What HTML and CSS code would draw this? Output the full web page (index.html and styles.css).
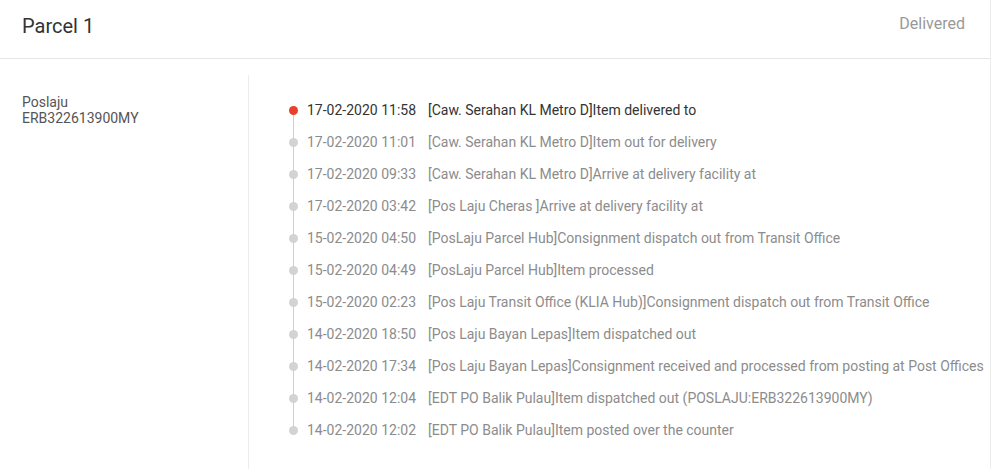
FILE: index.html
```html
<!DOCTYPE html>
<html lang="en">
<head>
  <meta charset="UTF-8">
  <title>Parcel Tracking</title>
  <meta name="viewport" content="width=device-width, initial-scale=1.0">
  <link rel="stylesheet" href="styles.css">
</head>

<body>
  <div class="card">
    <!-- Header -->
    <div class="card-header">
      <h2>Parcel 1</h2>
      <span class="status">Delivered</span>
    </div>

    <div class="card-body">
      <div class="courier">
        <div>Poslaju</div>
        <div>ERB322613900MY</div>
      </div>

      <ul class="timeline">
        <li class="active">
          <span class="dot"></span>
          <span class="date">17-02-2020 11:58</span>
          <span class="desc">[Caw. Serahan KL Metro D]Item delivered to</span>
        </li>
        <li>
          <span class="dot"></span>
          <span class="date">17-02-2020 11:01</span>
          <span class="desc">[Caw. Serahan KL Metro D]Item out for delivery</span>
        </li>
        <li>
          <span class="dot"></span>
          <span class="date">17-02-2020 09:33</span>
          <span class="desc">[Caw. Serahan KL Metro D]Arrive at delivery facility at</span>
        </li>
        <li>
          <span class="dot"></span>
          <span class="date">17-02-2020 03:42</span>
          <span class="desc">[Pos Laju Cheras ]Arrive at delivery facility at</span>
        </li>
        <li>
          <span class="dot"></span>
          <span class="date">15-02-2020 04:50</span>
          <span class="desc">[PosLaju Parcel Hub]Consignment dispatch out from Transit Office</span>
        </li>
        <li>
          <span class="dot"></span>
          <span class="date">15-02-2020 04:49</span>
          <span class="desc">[PosLaju Parcel Hub]Item processed</span>
        </li>
        <li>
          <span class="dot"></span>
          <span class="date">15-02-2020 02:23</span>
          <span class="desc">[Pos Laju Transit Office (KLIA Hub)]Consignment dispatch out from Transit Office</span>
        </li>
        <li>
          <span class="dot"></span>
          <span class="date">14-02-2020 18:50</span>
          <span class="desc">[Pos Laju Bayan Lepas]Item dispatched out</span>
        </li>
        <li>
          <span class="dot"></span>
          <span class="date">14-02-2020 17:34</span>
          <span class="desc">[Pos Laju Bayan Lepas]Consignment received and processed from posting at Post Offices</span>
        </li>
        <li>
          <span class="dot"></span>
          <span class="date">14-02-2020 12:04</span>
          <span class="desc">[EDT PO Balik Pulau]Item dispatched out (POSLAJU:ERB322613900MY)</span>
        </li>
        <li>
          <span class="dot"></span>
          <span class="date">14-02-2020 12:02</span>
          <span class="desc">[EDT PO Balik Pulau]Item posted over the counter</span>
        </li>
      </ul>
    </div>
  </div>
</body>
</html>
```

FILE: styles.css
```css
* {
  margin: 0;
  padding: 0;
  box-sizing: border-box;
}
body {
  font-family: Roboto, "Liberation Sans", sans-serif;
  background-color: #ffffff;
  color: #333333;
}
.card {
  width: 991px;
  height: 469px;
  border-right: 1px solid #ececec;
  background-color: white;
}
.card-header {
  height: 59px;
  display: flex;
  justify-content: space-between;
  align-items: flex-start;
  padding: 13px 25px 0 22px;
  border-bottom: 1px solid #e6e6e6;
}
.card-header h2 {
  font-size: 20px;
  font-weight: 400;
  color: #333333;
  line-height: 26px;
}
.status {
  font-size: 16px;
  color: #999999;
  line-height: 20px;
  margin-top: 1px;
}
.card-body {
  display: flex;
  padding-top: 16px;
  height: 410px;
}
.courier {
  width: 249px;
  border-right: 1px solid #ececec;
  padding: 19px 0 0 22px;
  font-size: 14px;
  line-height: 16px;
  color: #555555;
}
.timeline {
  list-style: none;
  padding: 19px 0 0 40px;
  position: relative;
}
/* vertical line joining the dots */
.timeline::before {
  content: "";
  position: absolute;
  left: 44px;
  top: 35px;
  height: 320px;
  width: 1px;
  background-color: #cfcfcf;
}
.timeline li {
  display: flex;
  align-items: center;
  height: 32px;
  font-size: 14px;
  color: #8c8c8c;
  white-space: nowrap;
}
.dot {
  width: 9px;
  height: 9px;
  border-radius: 50%;
  background-color: #d3d3d3;
  margin-right: 9px;
  position: relative;
  z-index: 1;
}
.timeline li.active {
  color: #333333;
}
.timeline li.active .dot {
  background-color: #e8402a;
}
.date {
  width: 121px;
}
```
